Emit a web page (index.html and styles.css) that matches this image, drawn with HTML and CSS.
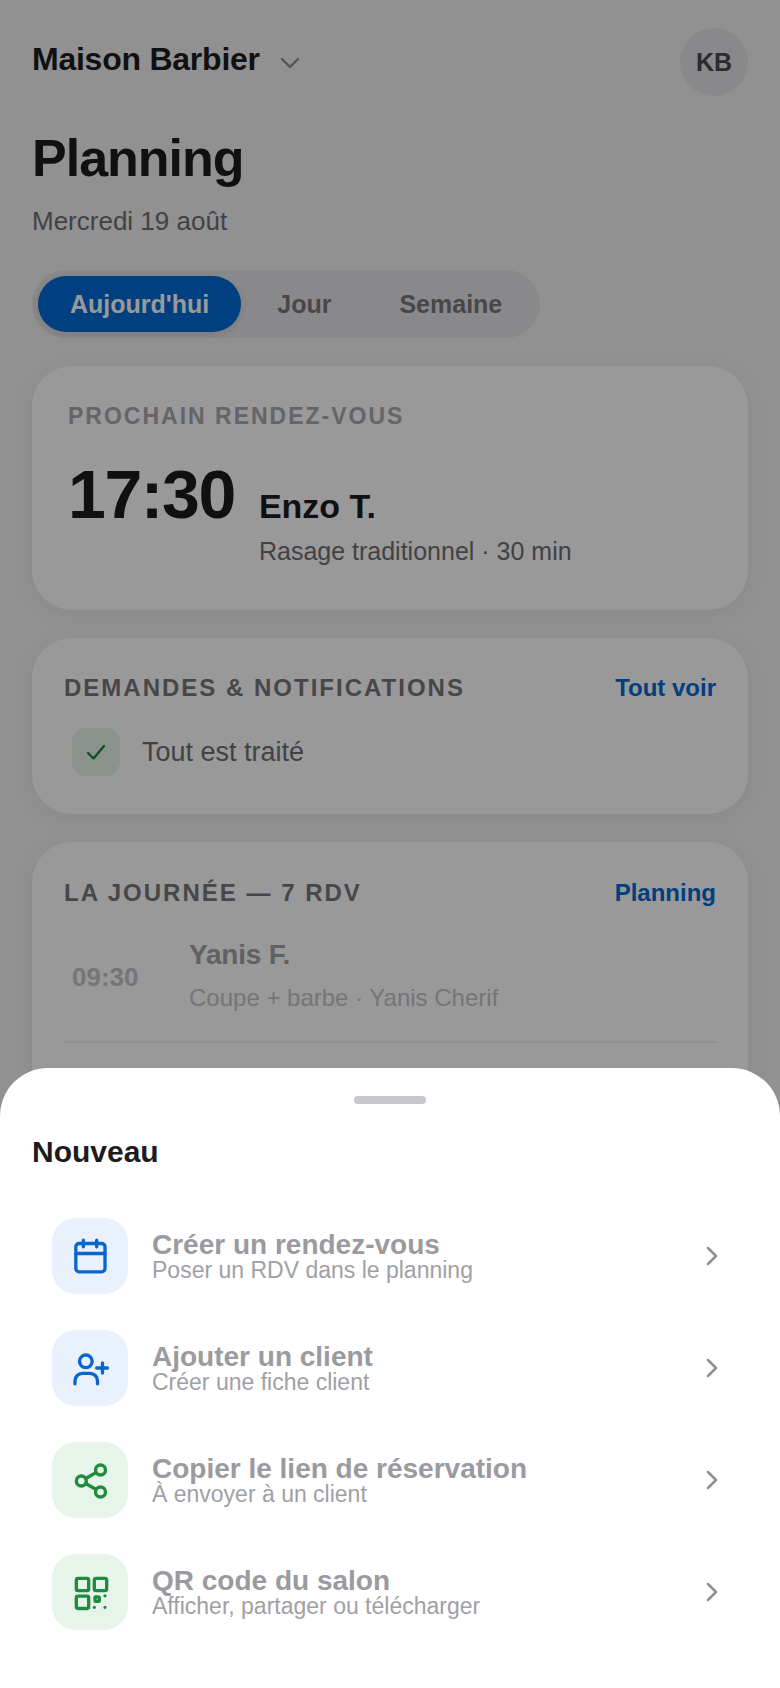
FILE: index.html
```html
<!DOCTYPE html>
<html lang="fr">
<head>
    <meta charset="UTF-8">
    <meta name="viewport" content="width=device-width, initial-scale=1.0">
    <title>Planning</title>
    <link rel="stylesheet" href="styles.css">
</head>
<body>
    <div class="page">
        <header class="topbar">
            <div class="salon">
                <span class="salon-name">Maison Barbier</span>
                <svg class="salon-caret" viewBox="0 0 20 12"><path d="M2 2l8 8 8-8"/></svg>
            </div>
            <div class="avatar">KB</div>
        </header>
        <h1>Planning</h1>
        <p class="date">Mercredi 19 août</p>

        <div class="tabs">
            <span class="tab active">Aujourd'hui</span>
            <span class="tab">Jour</span>
            <span class="tab">Semaine</span>
        </div>

        <section class="card next">
            <div class="next-label">PROCHAIN RENDEZ-VOUS</div>
            <div class="next-body">
                <div class="next-time">17:30</div>
                <div class="next-info">
                    <div class="next-name">Enzo T.</div>
                    <div class="next-sub">Rasage traditionnel · 30 min</div>
                </div>
            </div>
        </section>

        <section class="card block notif">
            <div class="block-head">
                <span class="block-title">DEMANDES &amp; NOTIFICATIONS</span>
                <a class="block-link">Tout voir</a>
            </div>
            <div class="done">
                <span class="done-icon">
                    <svg viewBox="0 0 24 24"><path d="M4 13l5.5 5.5L20 6"/></svg>
                </span>
                <span class="done-text">Tout est traité</span>
            </div>
        </section>

        <section class="card block day">
            <div class="block-head">
                <span class="block-title">LA JOURNÉE — 7 RDV</span>
                <a class="block-link">Planning</a>
            </div>
            <div class="appt">
                <div class="appt-time">09:30</div>
                <div class="appt-info">
                    <div class="appt-name">Yanis F.</div>
                    <div class="appt-sub">Coupe + barbe · Yanis Cherif</div>
                </div>
            </div>
        </section>
    </div>

    <div class="overlay"></div>

    <div class="sheet">
        <div class="handle"></div>
        <h2>Nouveau</h2>
        <div class="actions">
            <div class="action">
                <span class="action-icon blue">
                    <svg viewBox="0 0 24 24"><rect x="3.500" y="4.500" width="17.500" height="17" rx="2"/><path d="M3.500 10.500H21M8 2.500v4M16 2.500v4"/></svg>
                </span>
                <div class="action-text">
                    <div class="action-title">Créer un rendez-vous</div>
                    <div class="action-sub">Poser un RDV dans le planning</div>
                </div>
                <svg class="chevron" viewBox="0 0 24 24"><path d="M9 6l6 6-6 6"/></svg>
            </div>
            <div class="action">
                <span class="action-icon blue">
                    <svg viewBox="0 0 24 24"><circle cx="9.500" cy="8" r="3.800"/><path d="M3 21.500v-1.800a4.500 4.500 0 0 1 4.500-4.500h4.500a4.500 4.500 0 0 1 4.500 4.500v1.800M19.500 9v6M16 12h6.500"/></svg>
                </span>
                <div class="action-text">
                    <div class="action-title">Ajouter un client</div>
                    <div class="action-sub">Créer une fiche client</div>
                </div>
                <svg class="chevron" viewBox="0 0 24 24"><path d="M9 6l6 6-6 6"/></svg>
            </div>
            <div class="action">
                <span class="action-icon green">
                    <svg viewBox="0 0 24 24"><circle cx="18.300" cy="6" r="3"/><circle cx="6.800" cy="12.600" r="3"/><circle cx="18.300" cy="19.200" r="3"/><path d="M9.400 14.100l6.300 3.600M15.700 7.500l-6.300 3.600"/></svg>
                </span>
                <div class="action-text">
                    <div class="action-title">Copier le lien de réservation</div>
                    <div class="action-sub">À envoyer à un client</div>
                </div>
                <svg class="chevron" viewBox="0 0 24 24"><path d="M9 6l6 6-6 6"/></svg>
            </div>
            <div class="action">
                <span class="action-icon green">
                    <svg viewBox="0 0 24 24"><rect x="3.800" y="3.800" width="7.400" height="7.400" rx="1"/><rect x="14.600" y="3.800" width="7.400" height="7.400" rx="1"/><rect x="3.800" y="14.500" width="7.400" height="7.400" rx="1"/><rect x="15" y="15" width="2.600" height="2.600" rx=".5"/><path d="M21 14.300v.01M14.600 21.200v.01M21 21.200v.01"/></svg>
                </span>
                <div class="action-text">
                    <div class="action-title">QR code du salon</div>
                    <div class="action-sub">Afficher, partager ou télécharger</div>
                </div>
                <svg class="chevron" viewBox="0 0 24 24"><path d="M9 6l6 6-6 6"/></svg>
            </div>
        </div>
    </div>
</body>
</html>
```

FILE: styles.css
```css
* {
    box-sizing: border-box;
}
html, body {
    margin: 0;
    height: 1688px;
    overflow: hidden;
}
body {
    position: relative;
    width: 780px;
    background: #f2f2f2;
    color: #1c1c1e;
    font-family: "Liberation Sans", Arial, sans-serif;
}
svg {
    display: block;
    fill: none;
    stroke: currentColor;
    stroke-linecap: round;
    stroke-linejoin: round;
}
.page {
    padding: 28px 32px 0;
}
.topbar {
    display: flex;
    justify-content: space-between;
    align-items: center;
}
.salon {
    display: flex;
    align-items: center;
    gap: 20px;
    margin-bottom: 6px;
}
.salon-name {
    font-size: 32px;
    font-weight: 700;
    letter-spacing: -0.24px;
}
.salon-caret {
    width: 20px;
    height: 12px;
    margin-top: 8px;
    color: #8e8e93;
    stroke-width: 2.4;
}
.avatar {
    width: 68px;
    height: 68px;
    border-radius: 50%;
    background: #e5e5ea;
    display: flex;
    align-items: center;
    justify-content: center;
    font-size: 25px;
    font-weight: 700;
    color: #4a4a4e;
}
h1 {
    margin: 30px 0 0;
    font-size: 52px;
    line-height: 64px;
    font-weight: 700;
    letter-spacing: -1px;
}
.date {
    margin: 14px 0 0;
    font-size: 26px;
    line-height: 34px;
    color: #6e6e73;
}
.tabs {
    display: inline-flex;
    gap: 4px;
    margin-top: 32px;
    padding: 6px;
    border-radius: 34px;
    background: #e5e5ea;
}
.tab {
    height: 56px;
    padding: 0 32px;
    border-radius: 28px;
    font-size: 25px;
    font-weight: 700;
    line-height: 56px;
    color: #77777b;
}
.tab.active {
    background: #006ad6;
    color: #fff;
    box-shadow: 0 2px 8px rgba(0, 0, 0, 0.12);
}
.card {
    background: #fff;
    border-radius: 40px;
    box-shadow: 0 4px 24px rgba(0, 0, 0, 0.06);
}
.next {
    margin-top: 28px;
    height: 244px;
    padding: 36px;
}
.next-label {
    font-size: 23px;
    line-height: 28px;
    font-weight: 700;
    letter-spacing: 2px;
    color: #a8a8ad;
}
.next-body {
    display: flex;
    gap: 24px;
    margin-top: 22px;
}
.next-time {
    font-size: 68px;
    line-height: 84px;
    font-weight: 700;
    letter-spacing: -1.4px;
}
.next-info {
    padding-top: 34px;
}
.next-name {
    font-size: 34px;
    line-height: 40px;
    font-weight: 700;
}
.next-sub {
    margin-top: 7px;
    font-size: 25px;
    line-height: 36px;
    color: #6e6e73;
}
.block {
    margin-top: 28px;
    padding: 32px;
}
.block-head {
    display: flex;
    justify-content: space-between;
    align-items: center;
    height: 36px;
}
.block-title {
    font-size: 24px;
    font-weight: 700;
    letter-spacing: 2px;
    color: #77777b;
}
.block-link {
    font-size: 24px;
    font-weight: 700;
    color: #006ad6;
}
.notif {
    padding-bottom: 38px;
}
.done {
    display: flex;
    align-items: center;
    gap: 22px;
    margin-top: 22px;
    padding-left: 8px;
}
.done-icon {
    width: 48px;
    height: 48px;
    border-radius: 14px;
    background: #e7f4ea;
    color: #1a8a3a;
    display: flex;
    align-items: center;
    justify-content: center;
}
.done-icon svg {
    width: 24px;
    height: 24px;
    stroke-width: 2.4;
}
.done-text {
    font-size: 27px;
    color: #6e6e73;
}
.day {
    height: 400px;
    margin-top: 28px;
    padding-top: 33px;
}
.appt {
    display: flex;
    align-items: center;
    margin-top: 10px;
    padding: 0 0 8px 8px;
    border-bottom: 2px solid #f0f0f2;
    height: 122px;
}
.appt-time {
    width: 117px;
    font-size: 26px;
    font-weight: 700;
    color: #c4c4c8;
}
.appt-name {
    font-size: 28px;
    line-height: 34px;
    font-weight: 700;
    letter-spacing: -0.2px;
    color: #a2a2a6;
}
.appt-sub {
    margin-top: 8px;
    font-size: 24px;
    line-height: 36px;
    color: #c4c4c8;
}
.overlay {
    position: absolute;
    inset: 0;
    background: rgba(0, 0, 0, 0.4);
}
.sheet {
    position: absolute;
    left: 0;
    right: 0;
    top: 1068px;
    bottom: 0;
    padding: 28px 32px 0;
    background: #fff;
    border-radius: 48px 48px 0 0;
}
.handle {
    width: 72px;
    height: 8px;
    margin: 0 auto;
    border-radius: 4px;
    background: #c7c7cc;
}
h2 {
    margin: 28px 0 0;
    font-size: 30px;
    line-height: 40px;
    font-weight: 700;
}
.actions {
    margin-top: 28px;
}
.action {
    display: flex;
    align-items: center;
    gap: 24px;
    height: 112px;
    padding: 0 20px;
}
.action-icon {
    flex: none;
    width: 76px;
    height: 76px;
    border-radius: 24px;
    display: flex;
    align-items: center;
    justify-content: center;
}
.action-icon svg {
    width: 40px;
    height: 40px;
    stroke-width: 2;
}
.action-icon.blue {
    background: #e8f1fc;
    color: #0a66cc;
}
.action-icon.green {
    background: #e7f4ea;
    color: #1e8c3c;
}
.action-text {
    flex: 1;
}
.action-title {
    font-size: 28px;
    line-height: 32px;
    font-weight: 700;
    color: #9a9a9f;
}
.action-sub {
    margin-top: -5px;
    font-size: 23px;
    line-height: 28px;
    color: #a0a0a5;
}
.chevron {
    flex: none;
    width: 32px;
    height: 32px;
    color: #8e8e93;
    stroke-width: 1.9;
}
```
